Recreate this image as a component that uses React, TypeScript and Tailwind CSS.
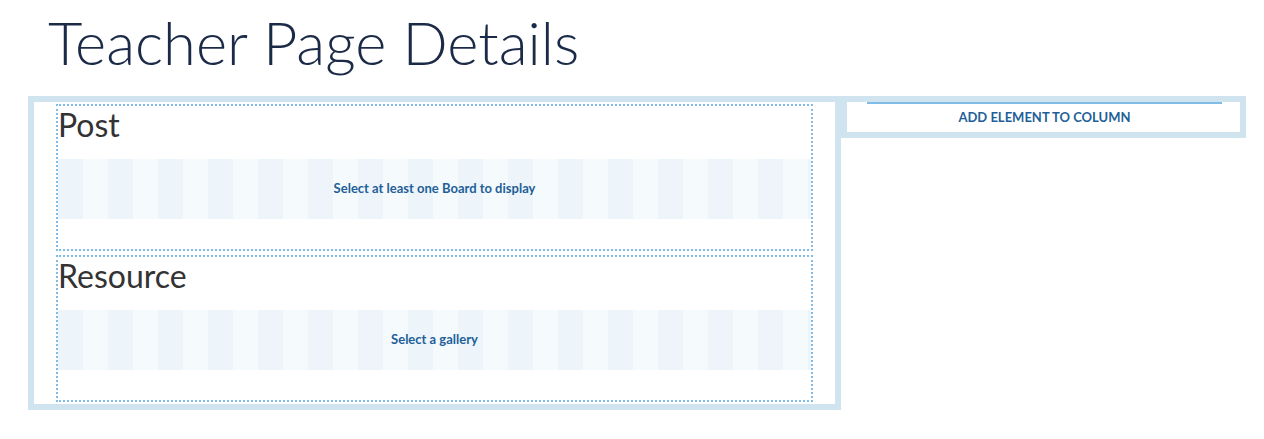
import React from "react";

const stripe =
  "bg-[repeating-linear-gradient(90deg,#edf5fb_0px,#edf5fb_25px,#f5fafd_25px,#f5fafd_50px)]";

function Widget({ title, message }: { title: string; message: string }) {
  return (
    <div className="h-[147px] border-2 border-dotted border-[#7fbde8] flex flex-col">
      <div className="text-[32px] leading-[37px] text-[#333333] mb-[16px]">{title}</div>
      <div
        className={`h-[60px] ${stripe} flex items-center justify-center text-[13px] font-bold text-[#1f5f98]`}
      >
        {message}
      </div>
    </div>
  );
}

export default function App() {
  return (
    <div
      className="bg-white w-[1264px] h-[439px] overflow-hidden"
      style={{ fontFamily: "Lato, 'Open Sans', sans-serif" }}
    >
      <h1 className="pl-[48px] text-[59.6px] font-light leading-[84px] pb-[12px] text-[#1b2a47]">
        Teacher Page Details
      </h1>
      <div className="flex items-start pl-[28px]">
        <div className="w-[813px] border-[6px] border-[#d0e4ef] px-[22px] py-[2px] flex flex-col gap-[4px]">
          <Widget title="Post" message="Select at least one Board to display" />
          <Widget title="Resource" message="Select a gallery" />
        </div>
        <div className="w-[405px] border-[6px] border-[#d0e4ef] h-[42px] flex flex-col">
          <div className="ml-[20px] mr-[18px] h-[2px] bg-[#7fbde8]" />
          <div className="ml-[20px] mr-[18px] h-[26px] leading-[26px] text-center text-[13px] font-bold text-[#1f5f98] uppercase">
            Add element to column
          </div>
        </div>
      </div>
    </div>
  );
}
